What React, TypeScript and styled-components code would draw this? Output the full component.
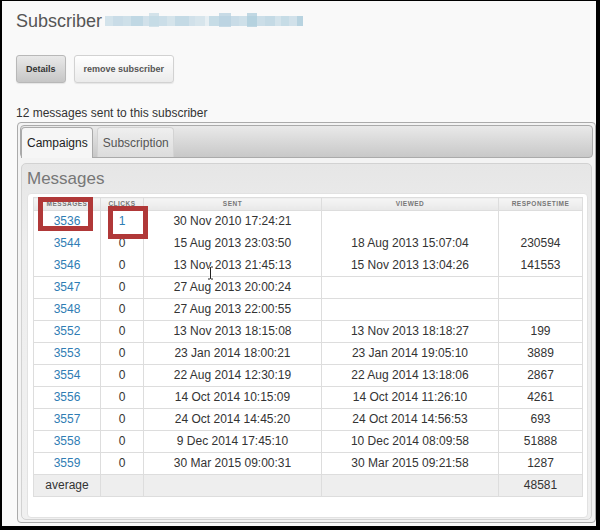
import React from "react";
import styled, { createGlobalStyle } from "styled-components";

const Global = createGlobalStyle`
  html, body { margin: 0; padding: 0; background: #000; }
  body { font-family: "Liberation Sans", Arial, sans-serif; }
  * { box-sizing: border-box; }
`;

const Frame = styled.div`
  margin: 1px 4px 0 2px;
  width: 594px;
  height: 525px;
  background: #f9f9f9;
  overflow: hidden;
  padding: 9px 0 0 14px;
`;

const Title = styled.h1`
  margin: 0;
  font-size: 18px;
  line-height: 22px;
  font-weight: normal;
  color: #555;
  display: flex;
  align-items: center;
  gap: 3px;
`;

const Actions = styled.div`
  display: flex;
  gap: 8px;
  margin-top: 23px;
`;

const Button = styled.button<{ $primary?: boolean }>`
  height: 28px;
  padding: 0 9px;
  font-family: "Liberation Sans", Arial, sans-serif;
  font-size: 9px;
  font-weight: bold;
  border-radius: 3px;
  color: ${(p) => (p.$primary ? "#333" : "#555")};
  border: 1px solid ${(p) => (p.$primary ? "#b8b8b8" : "#d2d2d2")};
  background: ${(p) =>
    p.$primary
      ? "linear-gradient(#e9e9e9, #c6c6c6)"
      : "linear-gradient(#ffffff, #ebebeb)"};
  box-shadow: 0 1px 1px rgba(0, 0, 0, 0.08);
`;

const Count = styled.p`
  margin: 23px 0 0 0;
  font-size: 12px;
  line-height: 14px;
  color: #333;
`;

const TabsWidget = styled.div`
  margin: 2px 0 0 1px;
  width: 579px;
  height: 401px;
  border: 1px solid #aaa;
  border-radius: 4px;
  padding: 2px;
  background: #f3f3f3;
`;

const TabBar = styled.div`
  height: 33px;
  border: 1px solid #aaa;
  border-radius: 4px;
  background: linear-gradient(#e9e9e9, #c8c8c8);
  display: flex;
  align-items: flex-end;
  gap: 4px;
`;

const Tab = styled.div<{ $active?: boolean }>`
  height: ${(p) => (p.$active ? "31px" : "30px")};
  margin-bottom: ${(p) => (p.$active ? "-1px" : "0")};
  padding: 8px 4px 0 5px;
  font-size: 12px;
  line-height: 14px;
  border: 1px solid ${(p) => (p.$active ? "#aaa" : "#d3d3d3")};
  border-bottom: none;
  border-radius: 4px 4px 0 0;
  color: ${(p) => (p.$active ? "#222" : "#555")};
  background: ${(p) =>
    p.$active ? "#f6f6f6" : "linear-gradient(#efefef, #dcdcdc)"};
`;

const Panel = styled.div`
  margin: 5px 1px 0 1px;
  height: 357px;
  border: 1px solid #d2d2d2;
  border-radius: 5px;
  background: linear-gradient(#e6e6e6, #eeeeee 80px, #f0f0f0);
  padding: 0 4px 1px 5px;
`;

const PanelTitle = styled.h2`
  margin: 0;
  font-size: 17px;
  line-height: 29px;
  font-weight: normal;
  color: #777;
`;

const Card = styled.div`
  width: 561px;
  height: 325px;
  background: #fff;
  border: 1px solid #e2e2e2;
  border-radius: 4px;
  padding: 3px 5px 19px 5px;
`;

const TableWrap = styled.div`
  position: relative;
`;

const Table = styled.table`
  width: 549px;
  border-collapse: collapse;
  table-layout: fixed;
  border-top: 1px solid #ddd;
`;

const Th = styled.th`
  padding: 0;
  height: 13px;
  line-height: 12px;
  font-size: 6.5px;
  font-weight: bold;
  letter-spacing: 0.5px;
  text-transform: uppercase;
  color: #777;
  text-align: center;
  background: linear-gradient(#f5f5f5, #e8e8e8);
  border: 1px solid #ddd;
`;

const Td = styled.td<{ $noRule?: boolean; $avg?: boolean }>`
  padding: 0;
  height: 22px;
  line-height: 21px;
  font-size: 12px;
  color: #333;
  text-align: center;
  white-space: nowrap;
  background: ${(p) => (p.$avg ? "#eeeeee" : "#fff")};
  border-left: 1px solid #ddd;
  border-right: 1px solid #ddd;
  border-bottom: 1px solid ${(p) => (p.$noRule ? "transparent" : "#ddd")};
`;

const Link = styled.a`
  color: #2f7db4;
  text-decoration: none;
`;

const Marker = styled.div<{ $x: number; $y: number; $w: number; $h: number }>`
  position: absolute;
  left: ${(p) => p.$x}px;
  top: ${(p) => p.$y}px;
  width: ${(p) => p.$w}px;
  height: ${(p) => p.$h}px;
  border: 5px solid #b03838;
  pointer-events: none;
`;

const Cursor = styled.svg`
  position: absolute;
  left: 174px;
  top: 69px;
`;

const blurBlocks: [number, number, number, number][] = [
  [0, 8, 0.14, 0], [8, 10, 0.22, 0], [18, 8, 0.18, 0], [26, 12, 0.28, 0],
  [38, 6, 0.16, 0], [44, 10, 0.24, 1], [54, 8, 0.2, 0], [62, 8, 0.13, 0],
  [70, 14, 0.26, 0], [84, 6, 0.16, 0], [90, 10, 0.12, 0],
  [104, 10, 0.24, 0], [114, 12, 0.32, 1], [126, 8, 0.22, 0], [134, 8, 0.18, 0],
  [142, 10, 0.36, 1], [152, 8, 0.2, 0], [160, 10, 0.26, 0], [170, 6, 0.14, 0],
  [176, 8, 0.24, 0], [184, 8, 0.16, 0], [192, 6, 0.34, 0],
];

function BlurredEmail() {
  return (
    <svg width="198" height="20" viewBox="0 0 198 20" aria-hidden="true">
      <rect x="0" y="5" width="198" height="10" fill="#dbe8ef" opacity="0.6" />
      {blurBlocks.map(([x, w, o, tall], i) => (
        <rect
          key={i}
          x={x}
          y={tall ? 2 : 5}
          width={w}
          height={tall ? 14 : 10}
          fill="#5f9dbd"
          opacity={o}
        />
      ))}
    </svg>
  );
}

type Row = {
  id: string;
  clicks: string;
  sent: string;
  viewed: string;
  rt: string;
};

const rows: Row[] = [
  { id: "3536", clicks: "1", sent: "30 Nov 2010 17:24:21", viewed: "", rt: "" },
  { id: "3544", clicks: "0", sent: "15 Aug 2013 23:03:50", viewed: "18 Aug 2013 15:07:04", rt: "230594" },
  { id: "3546", clicks: "0", sent: "13 Nov 2013 21:45:13", viewed: "15 Nov 2013 13:04:26", rt: "141553" },
  { id: "3547", clicks: "0", sent: "27 Aug 2013 20:00:24", viewed: "", rt: "" },
  { id: "3548", clicks: "0", sent: "27 Aug 2013 22:00:55", viewed: "", rt: "" },
  { id: "3552", clicks: "0", sent: "13 Nov 2013 18:15:08", viewed: "13 Nov 2013 18:18:27", rt: "199" },
  { id: "3553", clicks: "0", sent: "23 Jan 2014 18:00:21", viewed: "23 Jan 2014 19:05:10", rt: "3889" },
  { id: "3554", clicks: "0", sent: "22 Aug 2014 12:30:19", viewed: "22 Aug 2014 13:18:06", rt: "2867" },
  { id: "3556", clicks: "0", sent: "14 Oct 2014 10:15:09", viewed: "14 Oct 2014 11:26:10", rt: "4261" },
  { id: "3557", clicks: "0", sent: "24 Oct 2014 14:45:20", viewed: "24 Oct 2014 14:56:53", rt: "693" },
  { id: "3558", clicks: "0", sent: "9 Dec 2014 17:45:10", viewed: "10 Dec 2014 08:09:58", rt: "51888" },
  { id: "3559", clicks: "0", sent: "30 Mar 2015 09:00:31", viewed: "30 Mar 2015 09:21:58", rt: "1287" },
];

export default function App() {
  return (
    <>
      <Global />
      <Frame>
        <Title>
          Subscriber
          <BlurredEmail />
        </Title>
        <Actions>
          <Button $primary>Details</Button>
          <Button>remove subscriber</Button>
        </Actions>
        <Count>12 messages sent to this subscriber</Count>
        <TabsWidget>
          <TabBar>
            <Tab $active>Campaigns</Tab>
            <Tab>Subscription</Tab>
          </TabBar>
          <Panel>
            <PanelTitle>Messages</PanelTitle>
            <Card>
              <TableWrap>
                <Table>
                  <colgroup>
                    <col style={{ width: 67 }} />
                    <col style={{ width: 43 }} />
                    <col style={{ width: 178 }} />
                    <col style={{ width: 177 }} />
                    <col style={{ width: 84 }} />
                  </colgroup>
                  <thead>
                    <tr>
                      <Th>Messages</Th>
                      <Th>Clicks</Th>
                      <Th>Sent</Th>
                      <Th>Viewed</Th>
                      <Th>Responsetime</Th>
                    </tr>
                  </thead>
                  <tbody>
                    {rows.map((r, i) => {
                      const noRule = i < 2;
                      return (
                        <tr key={r.id}>
                          <Td $noRule={noRule}>
                            <Link href="#">{r.id}</Link>
                          </Td>
                          <Td $noRule={noRule}>
                            {r.clicks === "0" ? r.clicks : <Link href="#">{r.clicks}</Link>}
                          </Td>
                          <Td $noRule={noRule}>{r.sent}</Td>
                          <Td $noRule={noRule}>{r.viewed}</Td>
                          <Td $noRule={noRule}>{r.rt}</Td>
                        </tr>
                      );
                    })}
                    <tr>
                      <Td $avg>average</Td>
                      <Td $avg />
                      <Td $avg />
                      <Td $avg />
                      <Td $avg>48581</Td>
                    </tr>
                  </tbody>
                </Table>
                <Marker $x={5} $y={0} $w={55} $h={34} />
                <Marker $x={75} $y={9} $w={40} $h={33} />
                <Cursor width="7" height="14" viewBox="0 0 7 14" aria-hidden="true">
                  <path
                    d="M1 1h2l0.5 0.5L4 1h2M3.5 1.5v11M1 13h2l0.5-0.5L4 13h2"
                    stroke="#fff"
                    strokeWidth="2.2"
                    fill="none"
                  />
                  <path
                    d="M1 1h2l0.5 0.5L4 1h2M3.5 1.5v11M1 13h2l0.5-0.5L4 13h2"
                    stroke="#222"
                    strokeWidth="1"
                    fill="none"
                  />
                </Cursor>
              </TableWrap>
            </Card>
          </Panel>
        </TabsWidget>
      </Frame>
    </>
  );
}
